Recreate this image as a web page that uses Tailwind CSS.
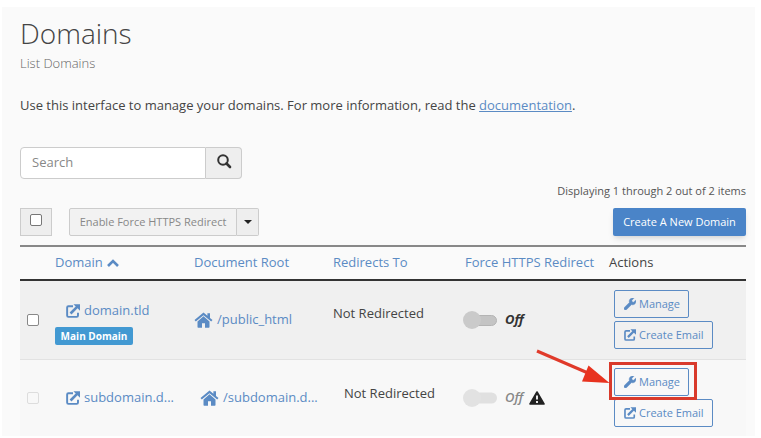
<!DOCTYPE html>
<html lang="en">

<head>
    <meta charset="UTF-8">
    <meta name="viewport" content="width=device-width, initial-scale=1.0">
    <title>Domains</title>
    <script src="https://cdn.jsdelivr.net/npm/@tailwindcss/browser@4"></script>
</head>

<body class="bg-white font-['Open_Sans',sans-serif] text-[13px] text-[#444]">

    <!-- Icon sprites -->
    <svg class="hidden">
        <symbol id="icon-external" viewBox="0 0 16 16">
            <path d="M8 2.5H2.8C2 2.5 1.3 3.2 1.3 4v9.2c0 .8.7 1.5 1.5 1.5h9.4c.8 0 1.5-.7 1.5-1.5V10" fill="none"
                stroke="currentColor" stroke-width="2.2" />
            <path d="M5.2 10.8 13 3" fill="none" stroke="currentColor" stroke-width="3" />
            <path d="M8.500 .2H16V7.700z" fill="currentColor" />
        </symbol>
        <symbol id="icon-home" viewBox="0 0 18 16">
            <path d="M9 .4 0 8.1l1.3 1.5L9 3.2l7.7 6.4 1.3-1.5-2.5-2.2V1.2h-2.6v2.5z" fill="currentColor" />
            <path d="M9 4.3 3 9.4V15c0 .4.3.7.7.7h3.8v-4.4h3v4.4h3.8c.4 0 .7-.3.7-.7V9.4z" fill="currentColor" />
        </symbol>
        <symbol id="icon-wrench" viewBox="0 0 512 512">
            <path fill="currentColor" stroke="currentColor" stroke-width="24"
                d="M507.73 109.1c-2.24-9.03-13.54-12.09-20.12-5.51l-74.36 74.36-67.88-11.31-11.31-67.88 74.36-74.36c6.62-6.62 3.43-17.9-5.66-20.16-47.38-11.74-99.55.91-136.58 37.93-39.64 39.64-50.55 97.1-34.05 147.2L18.74 402.76c-24.99 24.99-24.99 65.51 0 90.5 24.99 24.99 65.51 24.99 90.5 0l213.21-213.21c50.12 16.71 107.47 5.68 147.37-34.22 37.07-37.07 49.7-89.32 37.91-136.73z" />
        </symbol>
    </svg>

    <main class="mt-[7px] mr-1.5 ml-0.5 bg-[#fafafa] pt-2 pr-[9px] pl-[18px]">

        <header>
            <h1 class="text-[28px] leading-9 font-light">Domains</h1>
            <p class="mt-1 text-[13px] leading-4 font-light text-[#666]">List Domains</p>
        </header>

        <p class="mt-6 leading-5">Use this interface to manage your domains. For more information, read the
            <a href="#" class="text-[#5b8bc4] underline">documentation</a>.</p>

        <form class="mt-8 flex h-8">
            <input type="text" placeholder="Search" aria-label="Search"
                class="w-[186px] rounded-l-sm border border-[#ccc] bg-white px-[11px] placeholder:text-[#888]">
            <button type="button" aria-label="Run search"
                class="flex w-9 items-center justify-center rounded-r-sm border border-l-0 border-[#ccc] bg-[#eee] pb-1 text-[#333]">
                <svg class="size-4" viewBox="0 0 16 16" fill="none" stroke="currentColor">
                    <circle cx="7" cy="7" r="4.8" stroke-width="2" />
                    <path d="M10.5 10.5 14 14" stroke-width="2.6" stroke-linecap="round" />
                </svg>
            </button>
        </form>

        <p class="mt-1 text-right text-[11px] leading-4 text-[#555]">Displaying 1 through 2 out of 2 items</p>

        <div class="mt-[9px] flex h-7 items-stretch">
            <label class="flex w-8 items-center justify-center border border-[#ccc] bg-[#eee]">
                <input type="checkbox" aria-label="Select all"
                    class="mb-1 size-3 appearance-none rounded-xs border border-[#777] bg-white">
            </label>
            <div class="ml-[17px] flex">
                <button type="button" disabled
                    class="w-[168px] rounded-l-xs border border-[#ccc] bg-[#f2f2f2] text-[11px] text-[#888]">Enable Force
                    HTTPS Redirect</button>
                <button type="button" aria-label="More actions"
                    class="flex w-[22px] items-center justify-center rounded-r-xs border border-l-0 border-[#ccc] bg-[#eee] text-[#222]">
                    <svg class="h-1 w-2" viewBox="0 0 8 4" fill="currentColor">
                        <path d="M0 0h8L4 4z" />
                    </svg>
                </button>
            </div>
            <button type="button"
                class="ml-auto w-[133px] rounded-xs bg-[#4a84c8] text-[11px] font-medium text-white shadow-md">Create A New
                Domain</button>
        </div>

        <table class="mt-[9px] w-full table-fixed border-collapse">
            <colgroup>
                <col class="w-[35px]">
                <col class="w-[139px]">
                <col class="w-[139px]">
                <col class="w-[132px]">
                <col class="w-[144px]">
                <col>
            </colgroup>
            <thead>
                <tr class="h-[34px] border-t-2 border-b-2 border-t-[#888] border-b-[#333] text-left text-[#5b8bc4]">
                    <th></th>
                    <th class="font-normal"><a href="#" class="flex items-center gap-1">Domain
                            <svg class="h-2 w-3" viewBox="0 0 12 8" fill="none" stroke="currentColor" stroke-width="2.6">
                                <path d="M1 7l5-5 5 5" />
                            </svg></a></th>
                    <th class="font-normal"><a href="#">Document Root</a></th>
                    <th class="font-normal"><a href="#">Redirects To</a></th>
                    <th class="font-normal"><a href="#">Force HTTPS Redirect</a></th>
                    <th class="font-normal text-[#444]">Actions</th>
                </tr>
            </thead>
            <tbody>
                <tr class="h-[79px] border-b border-[#e2e2e2] bg-[#f0f0f0]">
                    <td class="pl-[7px]">
                        <input type="checkbox" aria-label="Select domain.tld"
                            class="block size-3 appearance-none rounded-xs border border-[#888] bg-white">
                    </td>
                    <td class="pt-1.5">
                        <a href="#" class="flex items-center gap-1 pl-[11px] text-[#5b8bc4]">
                            <svg class="size-3.5"><use href="#icon-external" /></svg>domain.tld</a>
                        <span
                            class="mt-1.5 block w-[78px] rounded-xs bg-[#4299d2] text-center text-[10px] leading-[18px] font-bold text-white">Main
                            Domain</span>
                    </td>
                    <td>
                        <a href="#" class="flex items-center gap-1 text-[#5b8bc4]">
                            <svg class="h-4 w-[19px]"><use href="#icon-home" /></svg>/public_html</a>
                    </td>
                    <td class="pb-3">Not Redirected</td>
                    <td>
                        <button type="button" role="switch" aria-checked="false" class="-ml-0.5 flex items-center gap-2">
                            <svg class="h-5 w-[34px]" viewBox="0 0 34 20">
                                <rect x="8" y="5.5" width="25.5" height="10" rx="5" fill="#c4c4c4" stroke="#b4b4b4" />
                                <circle cx="9" cy="10" r="9" fill="#cacaca" />
                            </svg>
                            <span class="font-bold text-[#333] italic">Off</span>
                        </button>
                    </td>
                    <td class="pl-[5px]">
                        <div class="flex flex-col items-start gap-[3px]">
                            <button type="button"
                                class="flex h-7 items-center gap-[3px] rounded-xs border border-[#5b8bc4] pr-2 pl-[9px] text-[11px] text-[#5b8bc4]">
                                <svg class="size-3"><use href="#icon-wrench" /></svg>Manage</button>
                            <button type="button"
                                class="flex h-7 items-center gap-[3px] rounded-xs border border-[#5b8bc4] pr-2 pl-[9px] text-[11px] text-[#5b8bc4]">
                                <svg class="size-3"><use href="#icon-external" /></svg>Create Email</button>
                        </div>
                    </td>
                </tr>
                <tr class="h-[77px] bg-[#f8f8f8]">
                    <td class="pl-[7px]">
                        <input type="checkbox" disabled aria-label="Select subdomain"
                            class="block size-3 appearance-none rounded-xs border border-[#ddd] bg-[#f8f8f8]">
                    </td>
                    <td>
                        <a href="#" class="flex items-center gap-1 pl-[11px] text-[#5b8bc4]">
                            <svg class="size-3.5"><use href="#icon-external" /></svg>subdomain.d...</a>
                    </td>
                    <td>
                        <a href="#" class="flex items-center gap-1 pl-1.5 text-[#5b8bc4]">
                            <svg class="h-4 w-[19px]"><use href="#icon-home" /></svg>/subdomain.d...</a>
                    </td>
                    <td class="pb-2 pl-[11px]">Not Redirected</td>
                    <td>
                        <div class="-ml-0.5 flex items-center gap-1.5">
                            <button type="button" role="switch" aria-checked="false" disabled
                                class="flex items-center gap-2">
                                <svg class="h-5 w-[34px]" viewBox="0 0 34 20">
                                    <rect x="8" y="4.5" width="26" height="11" rx="5.5" fill="#e0e0e0" />
                                    <circle cx="9" cy="10" r="9" fill="#e2e2e2" />
                                </svg>
                                <span class="font-semibold text-[#888] italic">Off</span>
                            </button>
                            <svg class="h-[14px] w-4" viewBox="0 0 16 14">
                                <path d="M8 1 15 13H1z" fill="#222" stroke="#222" stroke-width="1.6"
                                    stroke-linejoin="round" />
                                <path d="M8 4.4v4.2M8 10v2" stroke="#fff" stroke-width="1.8" />
                            </svg>
                        </div>
                    </td>
                    <td class="pl-[5px]">
                        <div class="flex flex-col items-start gap-[3px]">
                            <div class="relative">
                                <button type="button"
                                    class="flex h-7 items-center gap-[3px] rounded-xs border border-[#5b8bc4] pr-2 pl-[9px] text-[11px] text-[#5b8bc4]">
                                    <svg class="size-3"><use href="#icon-wrench" /></svg>Manage</button>
                                <!-- Callout around the Manage button -->
                                <div
                                    class="pointer-events-none absolute -top-1.5 -right-2 -bottom-1 -left-[5px] border-3 border-[#d93a2b]">
                                </div>
                                <svg class="pointer-events-none absolute -top-[19px] right-full mr-1 h-9 w-[74px]"
                                    viewBox="0 0 74 36">
                                    <path d="M1 2 52 24" stroke="#e03a2a" stroke-width="3" />
                                    <path d="M52.5 16.5 73.5 34 46 32.5z" fill="#e8331f" />
                                </svg>
                            </div>
                            <button type="button"
                                class="flex h-7 items-center gap-[3px] rounded-xs border border-[#5b8bc4] pr-2 pl-[9px] text-[11px] text-[#5b8bc4]">
                                <svg class="size-3"><use href="#icon-external" /></svg>Create Email</button>
                        </div>
                    </td>
                </tr>
            </tbody>
        </table>
    </main>
</body>

</html>
